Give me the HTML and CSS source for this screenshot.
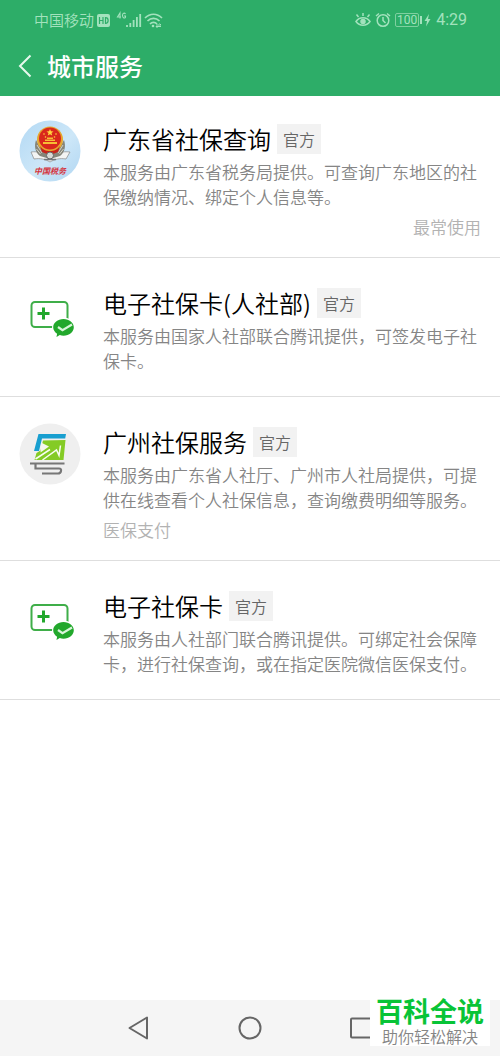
FILE: index.html
```html
<!DOCTYPE html>
<html lang="zh-CN">
<head>
<meta charset="utf-8">
<meta name="viewport" content="width=device-width, initial-scale=1">
<title>城市服务</title>
<link rel="stylesheet" href="styles.css">
</head>
<body>
<svg class="defs" width="0" height="0" aria-hidden="true">
  <symbol id="card" viewBox="0 -4 62 62">
    <rect x="12.500" y="14" width="36" height="25" rx="3.500" fill="none" stroke="#3fae49" stroke-width="2"/>
    <path d="M24.500 19.500v12M18.500 25.500h12" stroke="#22a82c" stroke-width="3" fill="none"/>
    <ellipse cx="44.500" cy="39.500" rx="11.500" ry="10" fill="#fff"/>
    <path d="M44.500 31c5.800 0 10.300 3.700 10.300 8.300s-4.500 8.400-10.300 8.400c-1.300 0-2.600-.2-3.700-.6L37.500 49l.6-3.300c-2.400-1.500-3.900-3.800-3.900-6.400 0-4.600 4.500-8.300 10.300-8.300z" fill="#22a82c"/>
    <path d="M39 39l4.500 3.200 9.500-5.700" stroke="#d9f5da" stroke-width="2.200" fill="none"/>
  </symbol>
</svg>

<header class="header">
  <div class="status">
    <div class="status-group">
      <span class="carrier">中国移动</span>
      <svg width="72" height="20" viewBox="0 0 72 20" aria-hidden="true">
        <rect x="3" y="4" width="13" height="13" rx="2" fill="#a3e2bd"/>
        <path d="M5.500 7v7M9 7v7M5.500 10.500H9M11.500 7.700v5.600c3.500 0 3.500-5.600 0-5.600z" stroke="#2dad68" stroke-width="1.200" fill="none"/>
        <path d="M26 8.500V3l-2.500 4h3.500M31.500 4c-1-1.500-3-1-3 1.500s2.500 3.500 3 1.500V6H30" stroke="#a3e2bd" stroke-width="1.100" fill="none"/>
        <path d="M33 17v-2M36.300 17v-4M39.600 17v-7M42.900 17V7M46.200 17V4" stroke="#a3e2bd" stroke-width="1.800"/>
        <path d="M51 8c5-5 12-5 17 0M53.500 11c3.500-3.500 8.500-3.500 12 0M56 14c2-2.200 5-2.200 7 0" stroke="#a3e2bd" stroke-width="1.700" fill="none"/>
        <circle cx="59" cy="16" r="1.300" fill="#a3e2bd"/>
        <path d="M62 15h5l-1.500-1.500M67 16.500h-5l1.500 1.500" stroke="#a3e2bd" stroke-width="1" fill="none"/>
      </svg>
    </div>
    <div class="status-group status-end">
      <svg width="16" height="18" viewBox="0 0 16 18" fill="none" stroke="#a3e2bd" stroke-width="1.500" aria-hidden="true">
        <path d="M1 10.500c3.500-5 10.500-5 14 0-3.500 5-10.500 5-14 0zM8 5V2M3.500 6L1.500 3.500M12.500 6l2-2.500"/>
        <circle cx="8" cy="10.500" r="2" fill="#a3e2bd"/>
      </svg>
      <svg width="16" height="18" viewBox="0 0 16 18" fill="none" stroke="#a3e2bd" stroke-width="1.500" aria-hidden="true">
        <circle cx="8" cy="9.500" r="5.800"/><path d="M8 6v3.500l2.500 2.500M1 5l3-2.500M15 5l-3-2.500"/>
      </svg>
      <span class="battery">100</span>
      <svg class="bolt" width="12" height="16" viewBox="0 0 12 16" fill="#a3e2bd" aria-hidden="true">
        <rect x="0" y="4" width="2" height="8"/><path d="M9 2L4.500 9H7l-1 5.500L10.500 7H8z"/>
      </svg>
      <span class="clock">4:29</span>
    </div>
  </div>
  <div class="titlebar">
    <button class="back" type="button" aria-label="返回">
      <svg width="14" height="24" viewBox="0 0 14 24" fill="none" stroke="#e6f8ed" stroke-width="2" aria-hidden="true"><path d="M12.500 1.500L2 12l10.500 10.500"/></svg>
    </button>
    <h1 class="page-title">城市服务</h1>
  </div>
</header>

<main class="list">
  <article class="item item-noted">
    <svg class="logo" viewBox="0 0 62 62" aria-hidden="true">
      <defs><linearGradient id="sky" x1="0" y1="0" x2="1" y2="1"><stop offset="0" stop-color="#b3d9f4"/><stop offset=".55" stop-color="#cde7f8"/><stop offset="1" stop-color="#b0d6f2"/></linearGradient></defs>
      <circle cx="31" cy="31" r="30.500" fill="url(#sky)"/>
      <path d="M12 32c7-1 13 1 19 6 6-5 12-7 20-6l-4 7c-6-1-11 0-16 3-5-3-10-4-16-3z" fill="#f3f4f3" stroke="#888" stroke-width=".7"/>
      <path d="M17 20c-2 6-1 12 4 16l10 3 10-3c5-4 6-10 4-16l-4 7-6 5h-8l-6-5z" fill="#85857a"/>
      <path d="M18 25l5 8M44 25l-5 8M17.500 29l4 5M44.500 29l-4 5" stroke="#e5e4d8" stroke-width=".8"/>
      <circle cx="31" cy="19.500" r="13" fill="#e6a72f"/>
      <circle cx="31" cy="18.500" r="11" fill="#d9271c"/>
      <path d="M31 9l1 2.300 2.500.2-2 1.600.7 2.400-2.200-1.300-2.200 1.300.7-2.400-2-1.600 2.500-.2z" fill="#ffd63d"/>
      <path d="M24 22h14v2H24zM26 19.500h10v1.500H26zM28 17.500h6V19h-6z" fill="#f7bd34"/>
      <g fill="#ffd63d"><circle cx="25" cy="14" r=".8"/><circle cx="37" cy="14" r=".8"/><circle cx="26.500" cy="17" r=".8"/><circle cx="35.500" cy="17" r=".8"/></g>
      <path d="M21 26c3 4 6 5 10 5s7-1 10-5l-2 6-5 2h-6l-5-2z" fill="#c8231b"/>
      <circle cx="31" cy="35.500" r="3.500" fill="#d8dad6" stroke="#666"/>
      <path d="M25 39.500h12" stroke="#71757a" stroke-width="1.500"/>
      <text class="logo-text" x="31" y="54" text-anchor="middle">中国税务</text>
    </svg>
    <div class="body">
      <div class="heading"><h2 class="name">广东省社保查询</h2><span class="badge">官方</span></div>
      <p class="desc">本服务由广东省税务局提供。可查询广东地区的社保缴纳情况、绑定个人信息等。</p>
      <p class="note note-end">最常使用</p>
    </div>
  </article>
  <article class="item">
    <svg class="logo" aria-hidden="true"><use href="#card"/></svg>
    <div class="body">
      <div class="heading"><h2 class="name">电子社保卡(人社部)</h2><span class="badge">官方</span></div>
      <p class="desc">本服务由国家人社部联合腾讯提供，可签发电子社保卡。</p>
    </div>
  </article>
  <article class="item item-noted">
    <svg class="logo" viewBox="0 0 62 62" aria-hidden="true">
      <circle cx="31" cy="31" r="30.500" fill="#efefef"/>
      <path d="M19.500 11H47l-.8 4.500H23L20 28h-5z" fill="#189fd0"/>
      <path d="M24 17.500l22.500-.5L44.500 37H15.500l2-7 4-2.500z" fill="#84cb25"/>
      <path d="M22 19.500l8 4-8.500 6z" fill="#f4f7ef"/>
      <path d="M16.500 36L31 26.500M23.500 37L37.500 27l2.500 5.500 1.500-10" fill="none" stroke="#f8fcf2" stroke-width="1.500"/>
      <path d="M11 40.500h34.500M16.500 40.500v5H40q2.500 0 2 2.500t-3 2.500H23" fill="none" stroke="#777" stroke-width="2.200"/>
    </svg>
    <div class="body">
      <div class="heading"><h2 class="name">广州社保服务</h2><span class="badge">官方</span></div>
      <p class="desc">本服务由广东省人社厅、广州市人社局提供，可提供在线查看个人社保信息，查询缴费明细等服务。</p>
      <p class="note">医保支付</p>
    </div>
  </article>
  <article class="item">
    <svg class="logo" aria-hidden="true"><use href="#card"/></svg>
    <div class="body">
      <div class="heading"><h2 class="name">电子社保卡</h2><span class="badge">官方</span></div>
      <p class="desc">本服务由人社部门联合腾讯提供。可绑定社会保障卡，进行社保查询，或在指定医院微信医保支付。</p>
    </div>
  </article>
</main>

<footer class="footer">
  <nav class="nav">
    <button class="nav-button" type="button" aria-label="返回"><svg width="24" height="24" viewBox="0 0 24 24"><path d="M20 1.500v21L2.500 12z"/></svg></button>
    <button class="nav-button" type="button" aria-label="主页"><svg width="24" height="24" viewBox="0 0 24 24"><circle cx="12" cy="12" r="10.500"/></svg></button>
    <button class="nav-button" type="button" aria-label="最近任务"><svg width="24" height="24" viewBox="0 0 24 24"><rect x="2" y="2.500" width="20" height="19" rx="1"/></svg></button>
  </nav>
  <aside class="watermark">
    <strong class="mark-name">百科全说</strong>
    <span class="mark-tag">助你轻松解决</span>
  </aside>
</footer>
</body>
</html>
```
FILE: styles.css
```css
* {
  box-sizing: border-box;
}

body {
  display: flex;
  flex-direction: column;
  min-height: 100vh;
  margin: 0;
  background: #fff;
  font-family: "Noto Sans CJK SC", sans-serif;
}

h1, h2, p {
  margin: 0;
  font-weight: 400;
}

button {
  padding: 0;
  border: 0;
  background: none;
}

svg {
  display: block;
  flex: none;
}

.defs {
  position: absolute;
}

.header {
  height: 96px;
  background: #2dad68;
}

.status {
  display: flex;
  justify-content: space-between;
  height: 40px;
  padding: 0 33px 0 34px;
  color: #a3e2bd;
}

.status-group {
  display: flex;
  align-items: center;
}

.status-end {
  gap: 4px;
}

.carrier {
  font-size: 15px;
  font-weight: 350;
  line-height: 20px;
}

.battery {
  padding: 0 1px;
  border: 1px solid #7fd0a0;
  border-radius: 2px;
  font: 12px/12px Roboto, sans-serif;
}

.bolt {
  margin-left: -3px;
}

.clock {
  font: 16px/20px Roboto, sans-serif;
}

.titlebar {
  display: flex;
  align-items: center;
  gap: 15px;
  height: 52px;
  padding-left: 18px;
}

.page-title {
  color: #fff;
  font-size: 24px;
  font-weight: 500;
  line-height: 32px;
}

.list {
  flex: 1;
}

.item {
  display: flex;
  align-items: flex-start;
  gap: 22px;
  padding: 30px 19px 23px;
  border-bottom: 1px solid #dedede;
}

.item:first-child {
  padding-top: 28px;
}

.item-noted {
  padding-bottom: 18px;
}

.logo {
  width: 62px;
  height: 62px;
  margin-top: -4px;
}

.logo-text {
  fill: #d5323b;
  font-size: 8px;
  font-style: italic;
  font-weight: 700;
}

.body {
  flex: 1;
}

.heading {
  display: flex;
  gap: 6px;
  margin-bottom: 5px;
}

.name {
  color: #000;
  font-size: 24px;
  font-weight: 350;
  line-height: 30px;
}

.badge {
  padding: 0 6px;
  background: #f2f2f2;
  color: #666;
  font-size: 16px;
  font-weight: 350;
  line-height: 30px;
}

.desc {
  color: #858585;
  font-size: 17px;
  font-weight: 350;
  line-height: 25px;
}

.note {
  margin-top: 5px;
  color: #b2b2b2;
  font-size: 17px;
  font-weight: 350;
  line-height: 25px;
}

.note-end {
  text-align: right;
}

.footer {
  position: relative;
  background: #f5f5f5;
}

.nav {
  display: flex;
  justify-content: space-around;
  align-items: center;
  height: 56px;
  padding: 0 84px;
}

.nav-button svg {
  fill: none;
  stroke: #666;
  stroke-width: 2;
  stroke-linejoin: round;
}

.watermark {
  position: absolute;
  right: 10px;
  bottom: 10px;
  display: flex;
  flex-direction: column;
  align-items: center;
  width: 120px;
  padding-top: 2px;
  background: #fff;
}

.mark-name {
  color: #08c437;
  font-size: 27px;
  font-weight: 700;
  line-height: 30px;
}

.mark-tag {
  color: #858585;
  font-size: 16px;
  font-weight: 350;
  line-height: 20px;
}
```
